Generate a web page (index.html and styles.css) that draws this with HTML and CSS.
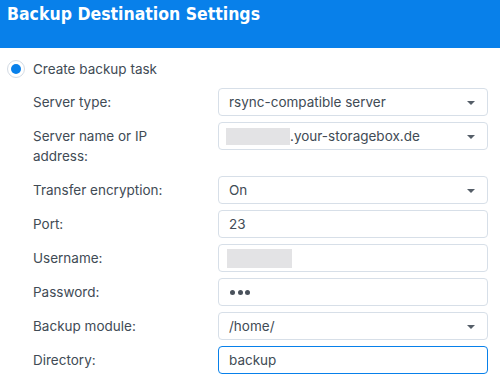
FILE: index.html
```html
<!DOCTYPE html>
<html>
<head>
    <title>Backup Destination Settings</title>
<link rel="stylesheet" href="styles.css">
</head>
<body>

<div class="header">Backup Destination Settings</div>

<div class="content">

  <div class="radio-row">
    <span class="radio"><span class="dot"></span></span>
    <span>Create backup task</span>
  </div>

  <div class="form">
    <div class="row">
      <div class="label">Server type:</div>
      <div class="field select">rsync-compatible server<span class="arrow"></span></div>
    </div>
    <div class="row tall">
      <div class="label">Server name or IP<br>address:</div>
      <div class="field select"><span class="blur blur-host"></span>.your-storagebox.de<span class="arrow"></span></div>
    </div>
    <div class="row">
      <div class="label">Transfer encryption:</div>
      <div class="field select">On<span class="arrow"></span></div>
    </div>
    <div class="row">
      <div class="label">Port:</div>
      <div class="field">23</div>
    </div>
    <div class="row">
      <div class="label">Username:</div>
      <div class="field"><span class="blur blur-user"></span></div>
    </div>
    <div class="row">
      <div class="label">Password:</div>
      <div class="field"><span class="pw"><i></i><i></i><i></i></span></div>
    </div>
    <div class="row">
      <div class="label">Backup module:</div>
      <div class="field select">/home/<span class="arrow"></span></div>
    </div>
    <div class="row">
      <div class="label">Directory:</div>
      <div class="field focus">backup</div>
    </div>
  </div>

</div>

</body>
</html>
```

FILE: styles.css
```css
body {
  margin: 0;
  background-color: white;
  font-family: Inter, "Noto Sans", Arial, sans-serif;
  font-size: 13.5px;
  color: #414b55;
}

.header {
  background-color: #0880ea;
  color: white;
  height: 48px;
  padding: 4px 7px 0 7px;
  box-sizing: border-box;
  font-family: "DejaVu Sans Condensed", "DejaVu Sans", sans-serif;
  font-weight: bold;
  font-size: 17.5px;
}

.content {
  padding: 10px 12px 0 7px;
}

.radio-row {
  display: flex;
  align-items: center;
  gap: 8px;
  height: 22px;
}

.radio {
  width: 16px;
  height: 16px;
  border: 1px solid #d3dbe4;
  border-radius: 50%;
  display: flex;
  align-items: center;
  justify-content: center;
}

.dot {
  width: 10px;
  height: 10px;
  border-radius: 50%;
  background-color: #0880ea;
}

.form {
  margin-top: 8px;
  padding-left: 26px;
  display: flex;
  flex-direction: column;
  gap: 6px;
}

.row {
  display: flex;
}

.label {
  width: 185px;
  padding-top: 4px;
  line-height: 20px;
}

.tall .label {
  padding-bottom: 4px;
}

.field {
  position: relative;
  width: 270px;
  height: 28px;
  box-sizing: border-box;
  border: 1px solid #d7dfe8;
  border-radius: 4px;
  padding: 0 10px;
  display: flex;
  align-items: center;
}

.field.focus {
  border-color: #0880ea;
}

.arrow {
  position: absolute;
  right: 12px;
  top: 12px;
  border-left: 4px solid transparent;
  border-right: 4px solid transparent;
  border-top: 4px solid #555e68;
}

.blur {
  display: inline-block;
  background-color: #e3e3e5;
}

.blur-host {
  width: 64px;
  height: 17px;
  margin-left: -3px;
}

.blur-user {
  width: 65px;
  height: 19px;
  margin-left: -2px;
}

.pw {
  display: flex;
  gap: 2.5px;
  margin-left: 1px;
}

.pw i {
  width: 5px;
  height: 5px;
  border-radius: 50%;
  background-color: #4a525c;
}
```
